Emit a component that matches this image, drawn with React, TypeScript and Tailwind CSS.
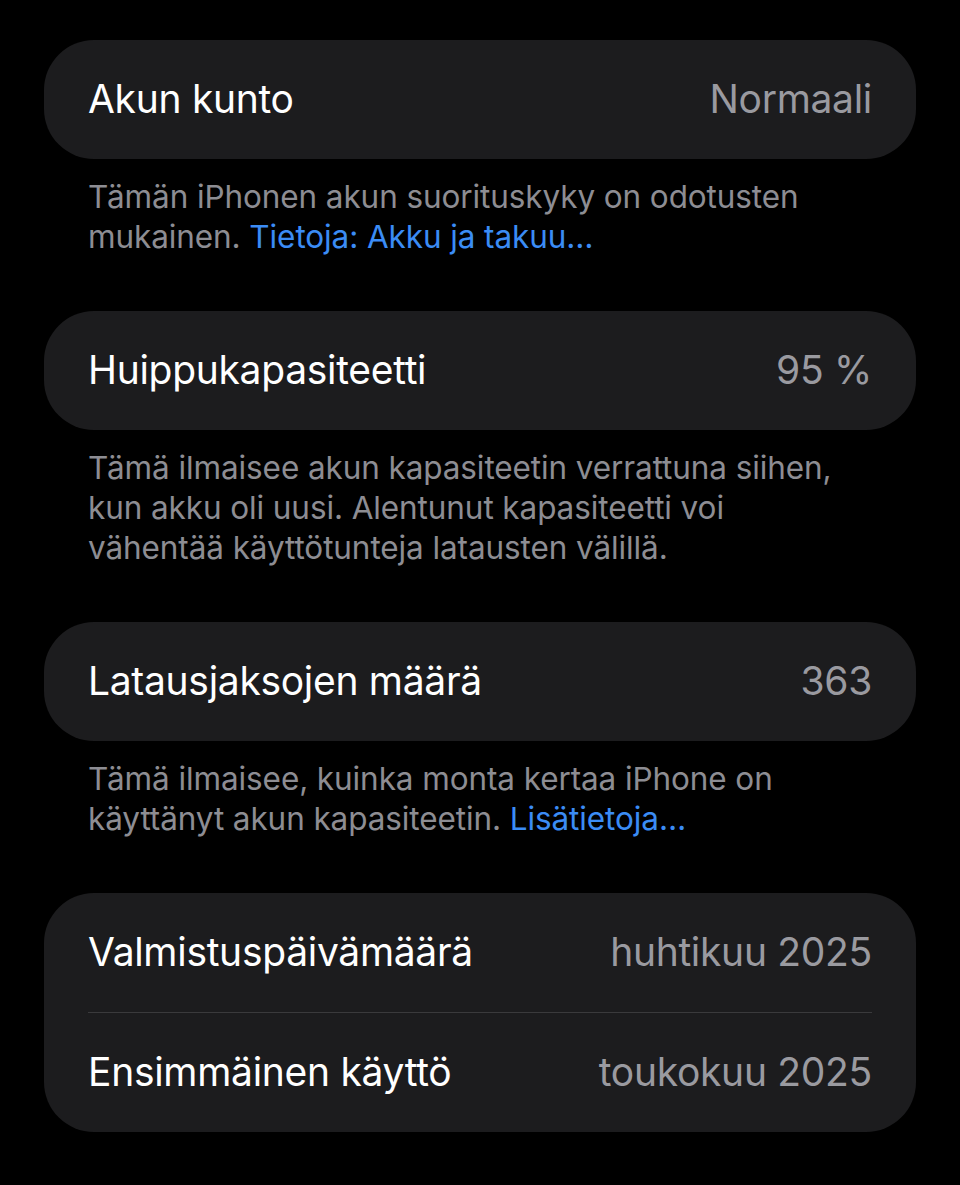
import React from 'react';

const font = { fontFamily: 'Inter, "Noto Sans", sans-serif' };

interface RowProps {
  label: string;
  value: string;
}

const Row: React.FC<RowProps> = ({ label, value }) => (
  <div className="flex h-[119px] items-center justify-between">
    <span className="text-[39px] tracking-[-0.3px] text-white">{label}</span>
    <span className="text-[39px] tracking-[-0.3px] text-[#9a9aa0]">{value}</span>
  </div>
);

const Card: React.FC<{ children: React.ReactNode }> = ({ children }) => (
  <div className="rounded-[50px] bg-[#1c1c1e] px-11">{children}</div>
);

const Footer: React.FC<{ children: React.ReactNode }> = ({ children }) => (
  <p className="mt-[18px] mb-[54px] px-11 text-[31.5px] leading-[40px] tracking-[-0.1px] text-[#8d8d93]">
    {children}
  </p>
);

const Link: React.FC<{ children: React.ReactNode }> = ({ children }) => (
  <span className="text-[#3b8cf5]">{children}</span>
);

export default function App() {
  return (
    <div className="min-h-[1185px] w-[960px] bg-black px-11 pt-10" style={font}>
      <Card>
        <Row label="Akun kunto" value="Normaali" />
      </Card>
      <Footer>
        Tämän iPhonen akun suorituskyky on odotusten
        <br />
        mukainen. <Link>Tietoja: Akku ja takuu…</Link>
      </Footer>

      <Card>
        <Row label="Huippukapasiteetti" value="95 %" />
      </Card>
      <Footer>
        Tämä ilmaisee akun kapasiteetin verrattuna siihen,
        <br />
        kun akku oli uusi. Alentunut kapasiteetti voi
        <br />
        vähentää käyttötunteja latausten välillä.
      </Footer>

      <Card>
        <Row label="Latausjaksojen määrä" value="363" />
      </Card>
      <Footer>
        Tämä ilmaisee, kuinka monta kertaa iPhone on
        <br />
        käyttänyt akun kapasiteetin. <Link>Lisätietoja…</Link>
      </Footer>

      <Card>
        <div className="border-b border-[#3a3a3c]">
          <Row label="Valmistuspäivämäärä" value="huhtikuu 2025" />
        </div>
        <Row label="Ensimmäinen käyttö" value="toukokuu 2025" />
      </Card>
    </div>
  );
}
